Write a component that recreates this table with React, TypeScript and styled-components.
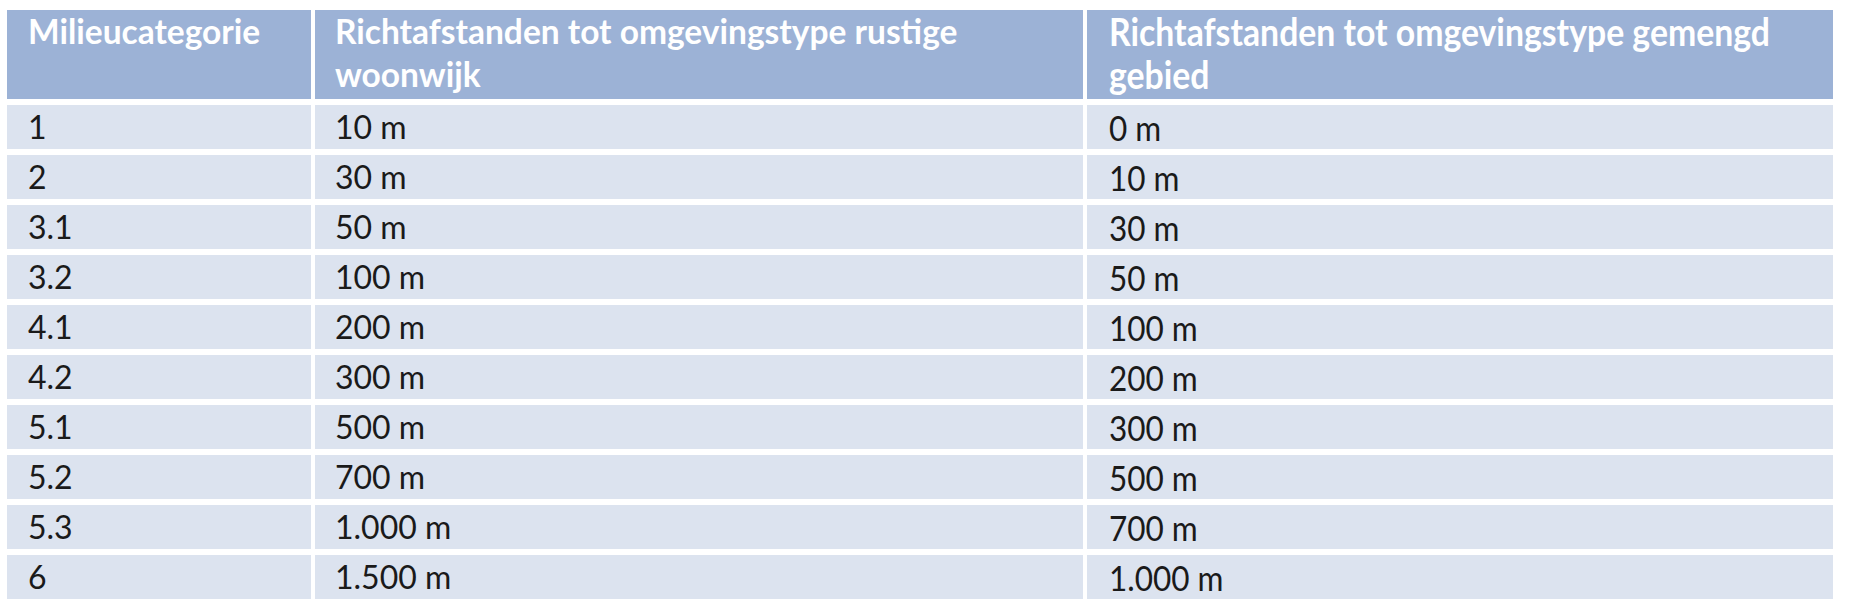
import React from 'react';
import styled, { createGlobalStyle } from 'styled-components';

const GlobalStyle = createGlobalStyle`
    html, body {
        margin: 0;
        padding: 0;
        background: #ffffff;
    }
    body {
        font-family: Lato, "Open Sans", sans-serif;
    }
`;

const rows: [string, string, string][] = [
    ['1', '10 m', '0 m'],
    ['2', '30 m', '10 m'],
    ['3.1', '50 m', '30 m'],
    ['3.2', '100 m', '50 m'],
    ['4.1', '200 m', '100 m'],
    ['4.2', '300 m', '200 m'],
    ['5.1', '500 m', '300 m'],
    ['5.2', '700 m', '500 m'],
    ['5.3', '1.000 m', '700 m'],
    ['6', '1.500 m', '1.000 m'],
];

// regelbreuken staan vast, zoals in de bron
const headers = [
    'Milieucategorie',
    'Richtafstanden tot omgevingstype rustige\nwoonwijk',
    'Richtafstanden tot omgevingstype gemengd\ngebied',
];

const padLeft = [21, 20, 22];

const App = () => {
    return (
        <>
            <GlobalStyle />
            <Page>
                <Table>
                    {headers.map((label, i) => (
                        <HeadCell key={label} col={i}>
                            <CellText condensed={i === 2}>{label}</CellText>
                        </HeadCell>
                    ))}
                    {rows.map((row, r) =>
                        row.map((value, i) => (
                            <BodyCell key={`${r}-${i}`} col={i}>
                                <CellText condensed={i === 2}>{value}</CellText>
                            </BodyCell>
                        ))
                    )}
                </Table>
            </Page>
        </>
    );
};

export default App;

const Page = styled.div`
    padding: 10px 0 0 7px;
`;

const Table = styled.div`
    display: grid;
    grid-template-columns: 304px 768px 746px;
    grid-template-rows: 89px repeat(10, 44px);
    column-gap: 4px;
    row-gap: 6px;
`;

const HeadCell = styled.div<{ col: number }>`
    background-color: #9cb2d6;
    color: #ffffff;
    font-weight: 700;
    font-size: ${({ col }) => (col === 2 ? 37.5 : 33.5)}px;
    line-height: 43px;
    white-space: pre;
    overflow: hidden;
    padding-left: ${({ col }) => padLeft[col]}px;
`;

const BodyCell = styled.div<{ col: number }>`
    background-color: #dce3ef;
    color: #1a1a1a;
    font-size: ${({ col }) => (col === 2 ? 35 : 32)}px;
    line-height: 44px;
    white-space: nowrap;
    padding-left: ${({ col }) => padLeft[col]}px;
`;

const CellText = styled.span<{ condensed?: boolean }>`
    display: inline-block;
    transform-origin: left top;
    transform: ${({ condensed }) => (condensed ? 'scaleX(0.9)' : 'none')};
`;
